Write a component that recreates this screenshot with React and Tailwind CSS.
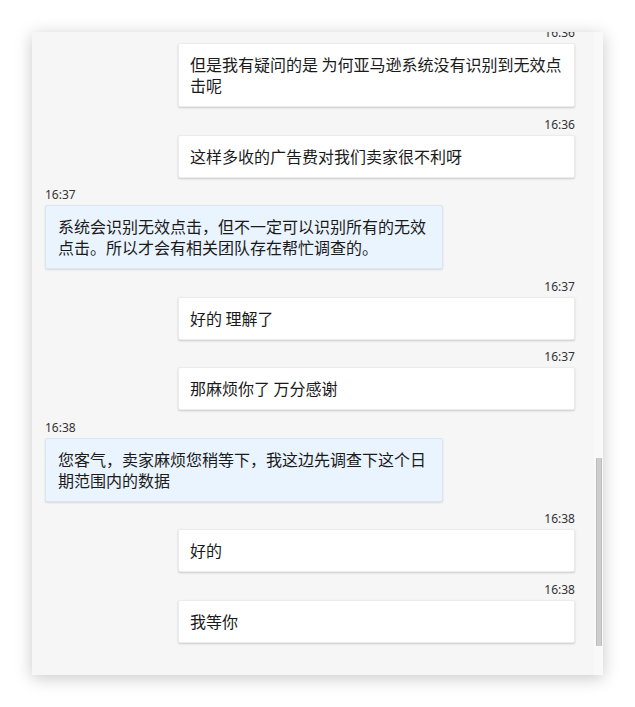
import React from 'react';

const messages = [
  { time: '16:36', from: 'me', text: '但是我有疑问的是 为何亚马逊系统没有识别到无效点击呢' },
  { time: '16:36', from: 'me', text: '这样多收的广告费对我们卖家很不利呀' },
  { time: '16:37', from: 'agent', text: '系统会识别无效点击，但不一定可以识别所有的无效点击。所以才会有相关团队存在帮忙调查的。' },
  { time: '16:37', from: 'me', text: '好的 理解了' },
  { time: '16:37', from: 'me', text: '那麻烦你了 万分感谢' },
  { time: '16:38', from: 'agent', text: '您客气，卖家麻烦您稍等下，我这边先调查下这个日期范围内的数据' },
  { time: '16:38', from: 'me', text: '好的' },
  { time: '16:38', from: 'me', text: '我等你' },
];

const Message = ({ msg }) => {
  const mine = msg.from === 'me';
  return (
    <div className={`mt-[9.5px] flex flex-col ${mine ? 'items-end' : 'items-start'}`}>
      <div className="text-[12px] leading-[16px] text-[#333333] font-['Noto_Sans','Noto_Sans_CJK_SC',sans-serif]">
        {msg.time}
      </div>
      <div
        className={
          mine
            ? 'mt-[2px] w-[397px] rounded-[2px] border border-[#ececec] bg-white px-[11px] py-[10px] text-[16px] leading-[21px] text-[#1a1a1a] shadow-[0_1px_2px_rgba(0,0,0,0.18)]'
            : 'mt-[2px] w-[398px] rounded-[2px] border border-[#d9e6f2] bg-[#eaf4fe] px-[12px] py-[10px] text-[16px] leading-[21px] text-[#1a1a1a] shadow-[0_1px_2px_rgba(0,0,0,0.12)]'
        }
      >
        {msg.text}
      </div>
    </div>
  );
};

export default function App() {
  return (
    <div className="min-h-[707px] w-[635px] bg-white p-8 font-['Noto_Sans_CJK_SC','Noto_Sans',sans-serif]">
      <div className="relative h-[643px] w-[571px] overflow-hidden bg-[#f6f6f6] shadow-[0_3px_16px_rgba(0,0,0,0.22)]">
        <div className="-mt-[16.5px] pl-[13px] pr-[28px]">
          {messages.map((m, i) => (
            <Message key={i} msg={m} />
          ))}
        </div>
        {/* scrollbar */}
        <div className="absolute right-0 top-0 h-full w-[9px] bg-[#f9f9f9]">
          <div className="absolute right-px top-[426px] h-[188px] w-[6px] border-x border-[#bdbdbd] bg-[#cdcdcd]" />
        </div>
      </div>
    </div>
  );
}
